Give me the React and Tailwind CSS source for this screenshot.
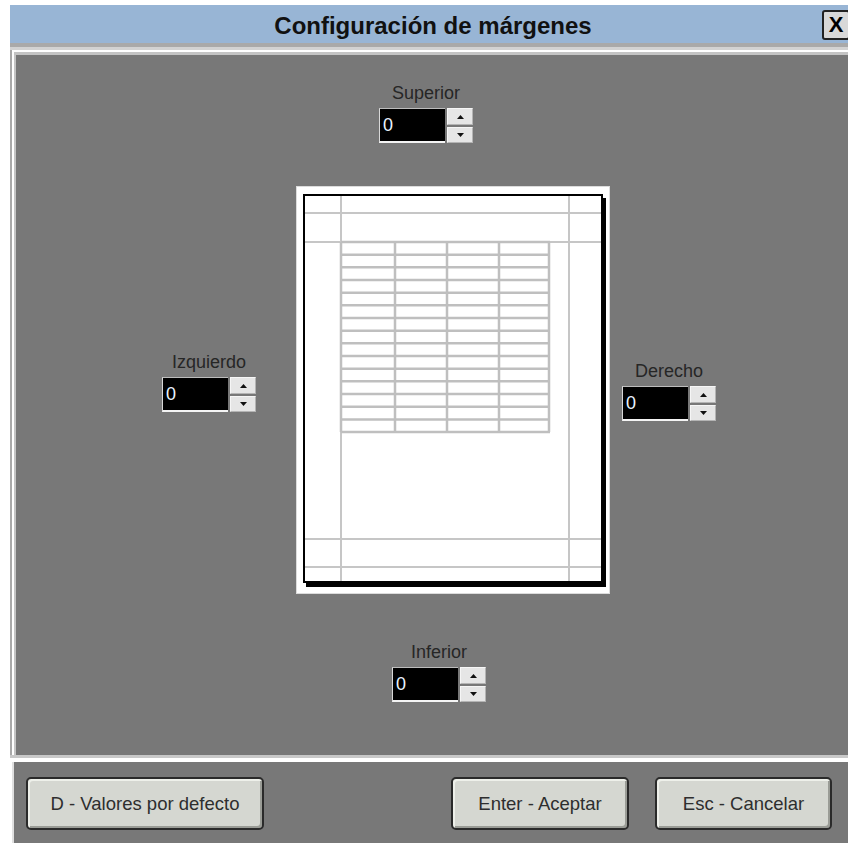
import React from "react";

const Arrow = ({ up }) => (
  <svg width="7" height="4" viewBox="0 0 7 4">
    {up ? <path d="M0 4 L3.5 0 L7 4 Z" fill="#111" /> : <path d="M0 0 L3.5 4 L7 0 Z" fill="#111" />}
  </svg>
);

const Spin = ({ label, className }) => (
  <div className={`flex w-[94px] flex-col ${className}`}>
    <span className="h-[20px] whitespace-nowrap text-center text-[18px] leading-[16px] text-[#262626]">{label}</span>
    <div className="mt-[3px] flex gap-[2px]">
      <div className="flex h-[35px] w-[66px] items-center border-b-2 border-l border-t border-b-[#f4f4f4] border-l-[#d8d8d8] border-t-[#bdbdbd] bg-black pl-[3px] text-[18px] text-[#eaf4ff]">
        0
      </div>
      <div className="flex flex-col gap-[2px]">
        <div className="flex h-[17px] w-[26px] items-center justify-center border border-[#f6f6f6] border-b-[#b4b4b4] border-r-[#b4b4b4] bg-[#e6e6e6]">
          <Arrow up />
        </div>
        <div className="flex h-[16px] w-[26px] items-center justify-center border border-[#f6f6f6] border-b-[#b4b4b4] border-r-[#b4b4b4] bg-[#e6e6e6]">
          <Arrow />
        </div>
      </div>
    </div>
  </div>
);

const PagePreview = () => {
  const rows = Array.from({ length: 16 }, (_, i) => 46 + i * 12.67);
  const cols = [36, 90, 142, 194, 244];
  return (
    <div className="ml-[40px] h-[408px] w-[314px] border border-[#dcdcdc] bg-white pl-[6px] pt-[7px]">
      <div className="h-[389px] w-[300px] border-2 border-black bg-white shadow-[3px_4px_0_#000]">
        <svg width="296" height="385" viewBox="0 0 296 385">
          <g stroke="#c6c6c6" strokeWidth="2">
            <line x1="36" y1="0" x2="36" y2="385" />
            <line x1="264" y1="0" x2="264" y2="385" />
            <line x1="0" y1="17" x2="296" y2="17" />
            <line x1="0" y1="46" x2="296" y2="46" />
            <line x1="0" y1="343" x2="296" y2="343" />
            <line x1="0" y1="371" x2="296" y2="371" />
          </g>
          <g stroke="#bfbfbf" strokeWidth="2.5">
            {rows.map((y) => (
              <line key={y} x1="36" y1={y} x2="245" y2={y} />
            ))}
            {cols.map((x) => (
              <line key={x} x1={x} y1="46" x2={x} y2={rows[rows.length - 1]} />
            ))}
          </g>
        </svg>
      </div>
    </div>
  );
};

const WinButton = ({ text, className }) => (
  <button
    className={`flex h-[53px] items-center justify-center rounded-[5px] border-2 border-[#2a2a2a] bg-[#d5d7d1] text-[18.5px] text-[#2e2e2e] shadow-[inset_2px_2px_0_#eef0ea,inset_-2px_-2px_0_#9a9c96] ${className}`}
  >
    {text}
  </button>
);

export default function App() {
  return (
    <div className="h-[843px] w-[848px] overflow-hidden bg-white pl-[10px] pt-[5px] font-['Liberation_Sans',Arial,sans-serif]">
      {/* Title bar */}
      <div className="relative flex h-[38px] items-center justify-center bg-[#98b5d5] pl-[8px] pt-[3px]">
        <h1 className="text-[24px] font-bold leading-none text-[#111]">Configuración de márgenes</h1>
        <button className="absolute left-[812px] top-[5px] flex h-[30px] w-[28px] items-center justify-center rounded-[3px] border-2 border-[#222] bg-[#d8d8d8] text-[22px] font-bold leading-none text-black">
          X
        </button>
      </div>

      {/* frame */}
      <div className="h-[4px] bg-[#a9a9a9]" />
      <div className="h-[3px] bg-[#d2d2d2]" />
      <div className="border-l-2 border-[#a9a9a9]">
        <div className="border-l-2 border-t-2 border-white">
          <div className="border-l-2 border-t-[3px] border-[#c4c4c4]">
            {/* Main panel */}
            <div className="flex h-[700px] flex-col bg-[#787878]">
              <Spin label="Superior" className="ml-[363px] mt-[30px]" />
              <div className="mt-[43px] flex items-start pl-[146px]">
                <Spin label="Izquierdo" className="mt-[168px]" />
                <PagePreview />
                <Spin label="Derecho" className="ml-[12px] mt-[177px]" />
              </div>
              <Spin label="Inferior" className="ml-[376px] mt-[50px]" />
            </div>
          </div>
        </div>
      </div>

      {/* separator */}
      <div className="h-[3px] bg-[#c8c8c8]" />
      <div className="h-[4px] bg-white" />

      {/* Bottom panel */}
      <div className="ml-[2px] flex h-[81px] items-start border-l-2 border-[#e0e0e0] bg-[#787878] pl-[12px] pr-[16px] pt-[15px]">
        <WinButton text="D - Valores por defecto" className="w-[238px]" />
        <div className="flex-1" />
        <WinButton text="Enter - Aceptar" className="w-[178px]" />
        <WinButton text="Esc - Cancelar" className="ml-[26px] w-[177px]" />
      </div>
    </div>
  );
}
